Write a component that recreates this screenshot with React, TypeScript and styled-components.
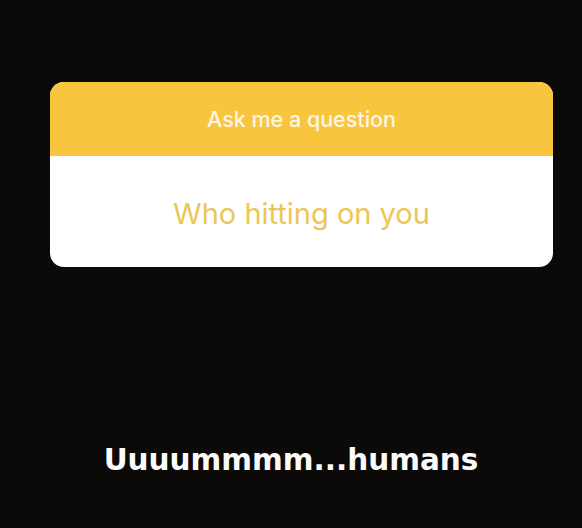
import React from "react";
import styled, { createGlobalStyle } from "styled-components";

const Global = createGlobalStyle`
  html, body { margin: 0; padding: 0; background: #0c0a09; }
  body { width: 582px; height: 528px; overflow: hidden; }
`;

const Page = styled.div`
  width: 582px;
  height: 528px;
  background: #0c0a09;
  display: flex;
  flex-direction: column;
  padding-top: 82px;
  box-sizing: border-box;
`;

const Card = styled.div`
  margin-left: 50px;
  width: 503px;
  height: 185px;
  border-radius: 14px;
  overflow: hidden;
  background: #ffffff;
  display: flex;
  flex-direction: column;
`;

const Header = styled.div`
  height: 74px;
  flex: none;
  background: #f9c53f;
  color: #fdf6e6;
  font-family: Inter, "Liberation Sans", sans-serif;
  font-weight: 500;
  font-size: 21.5px;
  display: flex;
  align-items: center;
  justify-content: center;
`;

const Body = styled.div`
  flex: 1;
  display: flex;
  align-items: center;
  justify-content: center;
  color: #ebc658;
  font-family: Inter, "Liberation Sans", sans-serif;
  font-size: 29px;
  padding-top: 4px;
`;

const Caption = styled.div`
  margin-top: 176px;
  align-self: center;
  color: #fbfbfb;
  font-family: "DejaVu Sans", sans-serif;
  font-weight: bold;
  font-size: 29.5px;
  line-height: 34px;
`;

export default function App() {
  return (
    <>
      <Global />
      <Page>
        <Card>
          <Header>Ask me a question</Header>
          <Body>Who hitting on you</Body>
        </Card>
        <Caption>Uuuummmm...humans</Caption>
      </Page>
    </>
  );
}
